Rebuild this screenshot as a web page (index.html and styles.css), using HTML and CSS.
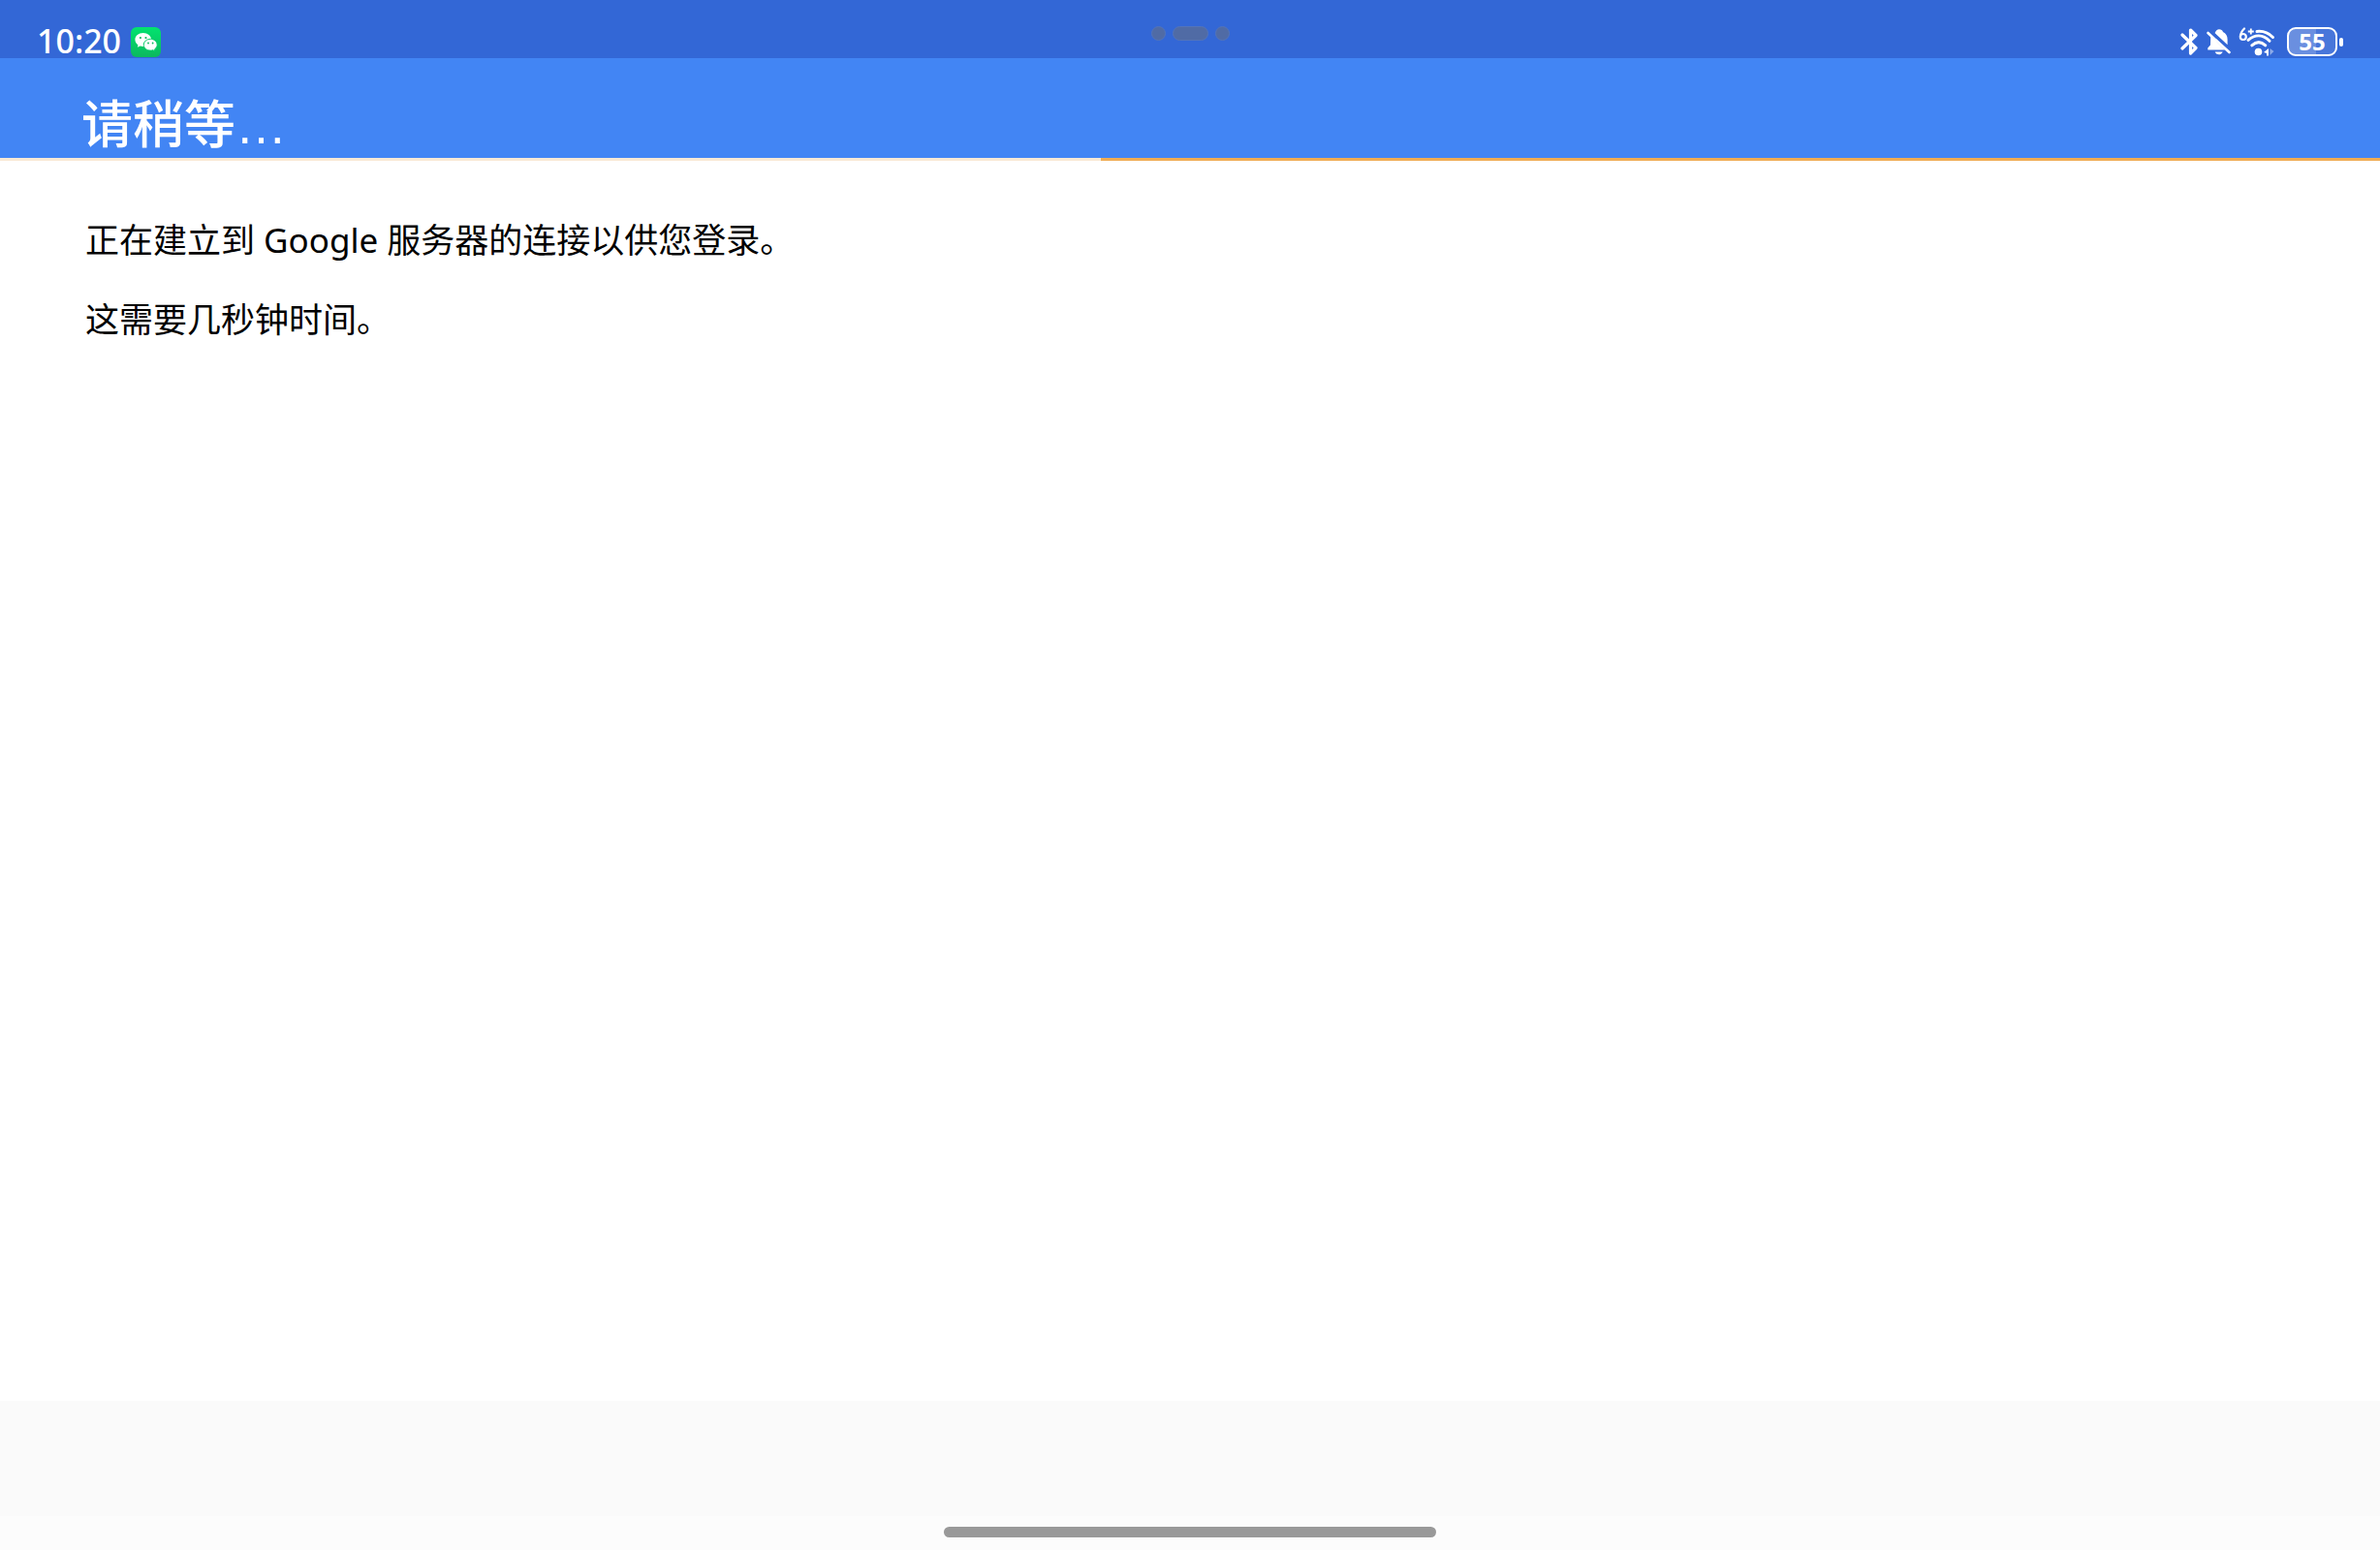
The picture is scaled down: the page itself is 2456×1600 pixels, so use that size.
FILE: index.html
```html
<!DOCTYPE html>
<html lang="zh-CN">
<head>
  <meta charset="UTF-8">
  <meta name="viewport" content="width=device-width, initial-scale=1.0">
  <title>请稍等…</title>
  <link rel="stylesheet" href="styles.css">
</head>
<body>
  <div class="status-bar">
    <div class="status-left">
      <time class="clock">10:20</time>
      <svg class="wechat" viewBox="0 0 31 31" aria-hidden="true">
        <defs>
          <linearGradient id="green" x1="0" y1="0" x2="0" y2="1">
            <stop offset="0" stop-color="#02e36f"/>
            <stop offset="1" stop-color="#0cb85f"/>
          </linearGradient>
        </defs>
        <rect width="31" height="31" rx="6" fill="url(#green)"/>
        <path d="M12.700 6C8 6 4.400 9.200 4.400 13c0 2.200 1.200 4.100 3.100 5.400l-.7 2.400 2.800-1.400c1 .3 2 .5 3.100.5 4.700 0 8.400-3.100 8.400-6.900S17.400 6 12.700 6z" fill="#fff"/>
        <path d="M20.300 12.300c-3.900 0-7 2.600-7 5.900s3.100 5.900 7 5.900c.9 0 1.700-.1 2.500-.4l2.300 1.200-.6-2c1.600-1.100 2.700-2.800 2.700-4.700 0-3.300-3.100-5.900-6.900-5.900z" fill="#fff" stroke="#07cc68" stroke-width="1"/>
        <g fill="#07b95c">
          <circle cx="9.900" cy="11" r="1.100"/>
          <circle cx="15.500" cy="11" r="1.100"/>
          <circle cx="18" cy="16.500" r=".9"/>
          <circle cx="22.600" cy="16.500" r=".9"/>
        </g>
      </svg>
    </div>
    <div class="camera" aria-hidden="true">
      <span class="lens"></span>
      <span class="lens lens-wide"></span>
      <span class="lens"></span>
    </div>
    <div class="status-right">
      <svg class="bluetooth" viewBox="0 0 18 28" aria-hidden="true">
        <path d="M2 7l14 13.500L10.500 26V2L16 7.500 2 21" fill="none" stroke="#fff" stroke-width="3.200" stroke-linejoin="round" stroke-linecap="round"/>
      </svg>
      <svg class="bell" viewBox="0 0 25 28" aria-hidden="true">
        <path d="M9 4.500C9.500 2.500 11 1.200 13 1.200s3.500 1 4 2.800c3 1.200 4.600 4 4.600 7.500v5.800L8.500 5z" fill="#fff"/>
        <path d="M4.300 8L19 22.500H1.300v-2L4 17.500z" fill="#fff"/>
        <path d="M8.700 24.500h8c-.8 1.900-2.200 2.800-4 2.800s-3.200-.9-4-2.800z" fill="#fff"/>
        <path d="M1.500 5l22 20" stroke="#fff" stroke-width="2.600" stroke-linecap="round"/>
      </svg>
      <svg class="wifi" viewBox="0 0 38 30" aria-hidden="true">
        <path d="M6 1.500C3.500 4 2 6.500 2 9.500" fill="none" stroke="#fff" stroke-width="2.200" stroke-linecap="round"/>
        <circle cx="4.800" cy="10" r="3" fill="none" stroke="#fff" stroke-width="2.200"/>
        <path d="M9.800 4.500h6M12.800 1.500v6" stroke="#fff" stroke-width="1.800"/>
        <g fill="none" stroke="#fff" stroke-width="3" stroke-linecap="round">
          <path d="M19 4.500c6.200-.7 12 1.500 16.500 6"/>
          <path d="M10 13.300c7-6 15-6 22 1"/>
          <path d="M13.800 18.800c4.500-4 9.500-4 14 0"/>
        </g>
        <circle cx="20.500" cy="25.500" r="3.800" fill="#fff"/>
        <path d="M26 26l5-4v7.500h-2V27z" fill="#fff"/>
        <path d="M32.500 22l4 3-4 4z" fill="#8ba9e8"/>
      </svg>
      <div class="battery">
        <span class="battery-body">55</span>
        <span class="battery-tip"></span>
      </div>
    </div>
  </div>

  <header class="title-bar">
    <h1>请稍等<span class="dots">…</span></h1>
  </header>
  <div class="progress"></div>

  <main class="message">
    <p>正在建立到 Google 服务器的连接以供您登录。</p>
    <p>这需要几秒钟时间。</p>
  </main>

  <footer class="button-bar"></footer>
  <div class="nav-bar">
    <span class="home-handle"></span>
  </div>
</body>
</html>
```
FILE: styles.css
```css
* {
  box-sizing: border-box;
}
body {
  margin: 0;
  min-height: 100vh;
  display: flex;
  flex-direction: column;
  background-color: #fff;
  color: #000;
  font-family: "Noto Sans", "Noto Sans CJK SC", sans-serif;
}

/* status bar */
.status-bar {
  display: grid;
  grid-template-columns: 1fr auto 1fr;
  height: 60px;
  padding: 0 38px;
  background-color: #3367d6;
  color: #fff;
}
.status-left,
.status-right {
  display: flex;
  align-items: center;
  padding-top: 25px;
}
.status-left {
  gap: 10px;
}
.status-right {
  justify-content: flex-end;
}
.clock {
  font-size: 34px;
  font-weight: 500;
  line-height: 34px;
  padding-bottom: 2px;
}
.wechat {
  width: 31px;
  height: 31px;
}
.camera {
  display: flex;
  gap: 7px;
  padding-top: 27px;
}
.lens {
  width: 15px;
  height: 15px;
  border: 1px solid #5474b8;
  border-radius: 8px;
  background-color: #506ba5;
}
.lens-wide {
  width: 37px;
}
.bluetooth {
  width: 18px;
  height: 28px;
  margin-right: 9px;
}
.bell {
  width: 25px;
  height: 28px;
  margin-right: 8px;
}
.wifi {
  width: 38px;
  height: 30px;
  margin-right: 12px;
}
.battery {
  display: flex;
  align-items: center;
  gap: 2px;
}
.battery-body {
  width: 52px;
  height: 30px;
  border: 2px solid #fff;
  border-radius: 9px;
  background: linear-gradient(to right, #6a8fe0 58%, #4876da 58%);
  font-size: 24px;
  font-weight: 700;
  line-height: 26px;
  text-align: center;
}
.battery-tip {
  width: 4px;
  height: 9px;
  border-radius: 2px;
  background-color: #fff;
}

/* title */
.title-bar {
  height: 103px;
  padding: 28px 84px 0;
  background-color: #4285f4;
  color: #fff;
}
h1 {
  margin: 0;
  font-family: "Noto Sans CJK SC", sans-serif;
  font-size: 53px;
  font-weight: 500;
  line-height: 74px;
}
.dots {
  font-family: "Liberation Sans", sans-serif;
}
.progress {
  height: 3px;
  background: linear-gradient(to right, #f9e9d5 1136px, #f0ad55 1136px);
}

/* message */
.message {
  flex: 1;
  padding: 56px 88px;
  font-size: 35px;
  line-height: 52px;
}
.message p {
  margin: 0 0 30px;
}

/* bottom */
.button-bar {
  height: 119px;
  background-color: #fafafa;
}
.nav-bar {
  display: flex;
  justify-content: center;
  height: 35px;
  padding-top: 11px;
  background-color: #fcfcfc;
}
.home-handle {
  width: 508px;
  height: 11px;
  border-radius: 6px;
  background-color: #999;
}
```
